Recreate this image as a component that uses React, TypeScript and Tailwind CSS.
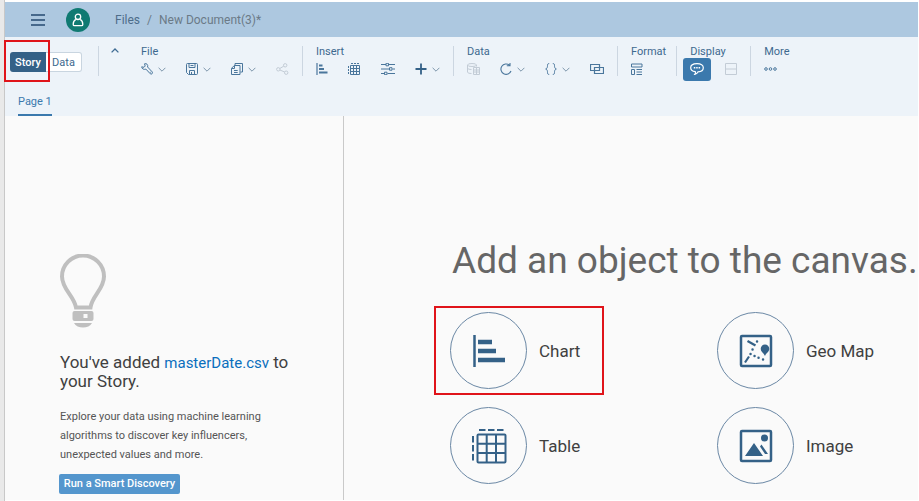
import type { ReactNode } from "react";

function Svg({ w = 12, h = 12, box, className = "", children }: { w?: number; h?: number; box?: string; className?: string; children: ReactNode }) {
  return (
    <svg width={w} height={h} viewBox={box ?? `0 0 ${w} ${h}`} fill="none" stroke="currentColor" strokeWidth="1" className={`shrink-0 ${className}`} aria-hidden="true">
      {children}
    </svg>
  );
}

function Chevron() {
  return (
    <Svg w={8} h={5} className="text-[#7d95ab]">
      <path d="M.6.8 4 4.200 7.400.8" />
    </Svg>
  );
}

function Tool({ label, menu, faded, children }: { label: string; menu?: boolean; faded?: boolean; children: ReactNode }) {
  return (
    <button type="button" aria-label={label} disabled={faded} className="flex shrink-0 items-center gap-[5px] text-[#4a769c] disabled:text-[#c3ccd6]">
      {children}
      {menu && <Chevron />}
    </button>
  );
}

function Group({ title, tight, children }: { title: string; tight?: boolean; children: ReactNode }) {
  return (
    <div className={`flex h-[30px] shrink-0 flex-col justify-between border-l border-[#ccd6e1] pl-[13px] ${tight ? "pr-2.5" : "pr-[13px]"}`}>
      <div className="text-[11px] leading-[12px]">{title}</div>
      <div className="flex h-[14px] items-center gap-5">{children}</div>
    </div>
  );
}

function FileGroup() {
  return (
    <div className="flex h-[30px] shrink-0 items-start border-l border-[#ccd6e1] pl-3">
      <button type="button" aria-label="Collapse toolbar" className="mt-0.5">
        <Svg w={8} h={5} className="text-[#3f6c94]">
          <path d="M.6 4.400 4 1l3.400 3.400" strokeWidth="1.300" />
        </Svg>
      </button>
      <div className="ml-[22px] flex h-full flex-col justify-between pr-[13px]">
        <div className="text-[11px] leading-[12px]">File</div>
        <div className="flex h-[14px] items-center gap-5">
          <Tool label="Edit" menu>
            <Svg>
              <path d="M.7 3.800 3 4.300 4.200 3 3.500.8C5.500 0 7.300 1.700 6.600 4l4.600 4.900c1 1.200-.7 3-1.900 1.900L4.900 6.100C2.900 6.900.7 5.900.7 3.800ZM8.900 9.200l.8.100" />
            </Svg>
          </Tool>
          <Tool label="Save" menu>
            <Svg>
              <path d="M.5 1.500q0-1 1-1h9q1 0 1 1v9q0 1-1 1h-8l-2-2ZM3 .5v4h6v-4M3.500 11.500v-4h5v4M5.500 9v2.500M4.500 2.500h3" />
            </Svg>
          </Tool>
          <Tool label="Copy" menu>
            <Svg>
              <path d="M4 2.500v-2h7.500v8.500H9.500M3.300 2.500h5.700v9H.5V5.300ZM3.500 2.700v2.800H.7M3 7.500h3.700M3 9.500h3.700" />
            </Svg>
          </Tool>
          <Tool label="Share" faded>
            <Svg w={13}>
              <circle cx="2.300" cy="6.300" r="1.700" />
              <circle cx="9.200" cy="2.300" r="1.700" />
              <circle cx="10.200" cy="9.700" r="1.700" />
              <path d="m3.800 5.500 3.900-2.300M3.900 7l4.800 2" />
            </Svg>
          </Tool>
        </div>
      </div>
    </div>
  );
}

function Toolbar() {
  return (
    <div className="flex items-start pt-[9px] text-[#3d698f]">
      <div className="mt-1.5 ml-[5px] flex h-5 w-[72px] shrink-0 text-[11px]">
        <div className="relative w-9">
          <button type="button" className="h-full w-full rounded-l-[3px] bg-[#346187] pt-0.5 leading-[18px] font-medium text-white">
            Story
          </button>
          <span className="pointer-events-none absolute -top-3 -right-1 -bottom-2.5 -left-1.5 border-2 border-[#e0141a]" />
        </div>
        <button type="button" className="flex-1 rounded-r-[3px] border border-l-0 border-[#c9d5e0] bg-white pt-px leading-[17px]">
          Data
        </button>
      </div>
      <div className="w-4 shrink-0" />
      <FileGroup />
      <Group title="Insert">
        <Tool label="Insert chart">
          <Svg>
            <path d="M1 0v12" strokeWidth="1.200" />
            <path d="M3 2.500h3.500M3 6h5M3 9.500h8.500" strokeWidth="1.800" />
          </Svg>
        </Tool>
        <Tool label="Insert table">
          <Svg w={13}>
            <path d="M2.500 2.500h9v9h-9ZM5.500 2.500v9M8.500 2.500v9M2.500 5.500h9M2.500 8.500h9" />
            <path d="M3 .5h2M6 .5h2M9 .5h2M.5 3v2M.5 6v2M.5 9v2" />
          </Svg>
        </Tool>
        <Tool label="Insert input control">
          <Svg w={14}>
            <path d="M0 1.500h5m3 0h6M0 6h8.500m3 0H14M0 10.500h3.500m3 0H14M5 .3h2.500v2.500H5ZM8.500 4.700H11v2.500H8.500ZM3.500 9.200H6v2.500H3.500Z" />
          </Svg>
        </Tool>
        <Tool label="Add" menu>
          <Svg className="text-[#346187]">
            <path d="M6 .5v11M.5 6h11" strokeWidth="1.800" />
          </Svg>
        </Tool>
      </Group>
      <Group title="Data">
        <Tool label="Data source" faded>
          <Svg w={13}>
            <ellipse cx="5" cy="2" rx="4.500" ry="1.500" />
            <path d="M.5 2v7c0 1 2 1.500 4 1.500M9.500 2v1.500M.5 5c0 1 2 1.500 4 1.500M6.500 4.500h6v7h-6ZM6.500 7h6M6.500 9h6M9.500 5v6" />
          </Svg>
        </Tool>
        <Tool label="Refresh" menu>
          <Svg>
            <path d="M9.500 2.200A5.200 5.200 0 1 0 11 8M6.800 2.800H10V0" strokeWidth="1.100" />
          </Svg>
        </Tool>
        <Tool label="Variables" menu>
          <Svg>
            <path d="M4.200.6C2.600.6 2.500 1.300 2.500 2.600S2.300 5.500.7 6c1.600.5 1.800 2.100 1.800 3.400s.1 2 1.700 2M7.800.6c1.600 0 1.700.7 1.700 2S9.700 5.500 11.300 6c-1.600.5-1.800 2.100-1.800 3.400s-.1 2-1.700 2" />
          </Svg>
        </Tool>
        <Tool label="Linked models">
          <Svg w={14}>
            <path d="M.5 1.500h9v6h-9ZM4.500 4.500h9v6h-9Z" strokeWidth="1.200" />
          </Svg>
        </Tool>
      </Group>
      <Group title="Format" tight>
        <Tool label="Layout">
          <Svg>
            <path d="M.5 1h10.500v3H.5ZM.5 6.500h3v5h-3ZM5.500 6.500H11M5.500 9H11M5.500 11.500H11" />
          </Svg>
        </Tool>
      </Group>
      <Group title="Display">
        <button type="button" aria-label="Comments" className="-ml-[7px] flex h-[23px] w-7 shrink-0 items-center justify-center rounded-[3px] bg-[#3b79ad] text-white">
          <Svg w={14} h={12}>
            <path d="M5.300 8.700C2.500 8.300.7 6.900.7 4.700.7 2.300 3 .7 7 .7s6.300 1.600 6.300 4c0 2.500-2.500 4-5.300 4.200-.4 1.100-1.500 2-3.200 2.400.6-.8.900-1.700.5-2.600Z" strokeWidth="1.200" />
            <path d="M3.800 4.800h1.500m.9 0h1.500m.9 0h1.500" strokeWidth="1.400" />
          </Svg>
        </button>
        <div className="-ml-1.5">
          <Tool label="Split view" faded>
            <Svg>
              <path d="M.5.500h11v11H.5ZM.5 6h11" />
            </Svg>
          </Tool>
        </div>
      </Group>
      <Group title="More">
        <Tool label="More">
          <Svg w={13}>
            <circle cx="2" cy="6" r="1.300" />
            <circle cx="6.500" cy="6" r="1.300" />
            <circle cx="11" cy="6" r="1.300" />
          </Svg>
        </Tool>
      </Group>
    </div>
  );
}

function Choice({ label, marked, children }: { label: string; marked?: boolean; children: ReactNode }) {
  return (
    <button type="button" className="relative flex items-center gap-3 text-left text-[17px] text-[#404040]">
      <span className="flex size-[77px] shrink-0 items-center justify-center rounded-full border border-[#6b88a5] text-[#346187]">
        {children}
      </span>
      <span className="pt-0.5 whitespace-nowrap">{label}</span>
      {marked && <span className="pointer-events-none absolute -top-1.5 -bottom-1.5 -left-4 w-[170px] border-2 border-[#e0141a]" />}
    </button>
  );
}

export default function App() {
  return (
    <div className="flex min-h-screen bg-white font-['Roboto','Liberation_Sans',sans-serif]">
      <div className="w-[5px] shrink-0 border-r border-[#c8c8c8] bg-[#e9e9e9]" />
      <div className="flex min-w-0 flex-1 flex-col pt-0.5 pr-px pb-px">
        <header className="flex h-[35px] shrink-0 items-center bg-[#adc8e0]">
          <button type="button" aria-label="Menu" className="ml-[26px] text-[#46698c]">
            <Svg w={14} h={12}>
              <path d="M0 1h14M0 6h14M0 11h14" strokeWidth="1.800" />
            </Svg>
          </button>
          <button type="button" aria-label="Account" className="ml-[21px] flex size-6 items-center justify-center rounded-full bg-[#107a72] text-white">
            <Svg w={12} h={14}>
              <circle cx="6" cy="3.800" r="2.700" strokeWidth="1.300" />
              <path d="M3.800 6.300C2 7.200 1.200 9 1.200 11.500q0 1.200 1.200 1.200h7.200q1.200 0 1.200-1.200C10.800 9 10 7.200 8.200 6.300" strokeWidth="1.300" />
            </Svg>
          </button>
          <nav className="ml-[25px] flex gap-[7px] text-[12px] text-[#6b7a87]">
            <a href="#files" className="text-[#4d6d8a]">Files</a>
            <span>/</span>
            <span>New Document(3)*</span>
          </nav>
        </header>

        <div className="flex h-[79px] shrink-0 flex-col justify-between bg-[#edf3f9]">
          <Toolbar />
          <div className="pl-[13px]">
            <button type="button" className="block h-[22px] border-b-2 border-[#3b79ad] pb-[5px] text-[11px] leading-[15px] text-[#3b79ad]">
              Page 1
            </button>
          </div>
        </div>

        <div className="flex flex-1 bg-[#fafafa]">
          <aside className="w-[339px] shrink-0 border-r border-[#c9c9c9] pt-[138px] pl-[55px]">
            <Svg w={46} h={75} className="text-[#bfbfbf]">
              <path d="M16 53.500C14 42 2 35 2 22.500a21 21 0 0 1 42 0C44 35 32 42 30.500 53.500Z" strokeWidth="4" />
              <path d="M14.500 57h17q2 0 2 2v6q0 2-2 2h-17q-2 0-2-2v-6q0-2 2-2ZM14 69h18c-3 6-15 6-18 0Z" fill="currentColor" stroke="none" />
              <path d="M23.500 60h4v4h-4Z" fill="#fafafa" stroke="none" />
            </Svg>
            <h2 className="mt-6 w-[240px] text-[17px] leading-[18px] text-[#404040]">
              You've added <a href="#data" className="text-[15px] text-[#0a6ebd]">masterDate.csv</a> to your Story.
            </h2>
            <p className="mt-[17px] w-[210px] text-[11px] leading-[19px] text-[#555]">
              Explore your data using machine learning algorithms to discover key influencers, unexpected values and more.
            </p>
            <button type="button" className="mt-2.5 -ml-px h-5 w-[121px] rounded-[2px] bg-[#5496cd] text-[11px] font-medium whitespace-nowrap text-white">
              Run a Smart Discovery
            </button>
          </aside>

          <main className="min-w-0 flex-1 pt-[121px] pl-[106px]">
            <h1 className="pl-0.5 text-[37px] leading-[48px] whitespace-nowrap text-[#666]">Add an object to the canvas.</h1>
            <div className="mt-[27px] grid grid-cols-[255px_max-content] gap-x-3 gap-y-[18px]">
              <Choice label="Chart" marked>
                <Svg w={34} h={34}>
                  <path d="M2.500 1v32" strokeWidth="2.500" />
                  <path d="M6 8h14M6 17h18M6 26h27" strokeWidth="4.500" />
                </Svg>
              </Choice>
              <Choice label="Geo Map">
                <Svg w={34} h={34}>
                  <rect x="2" y="2" width="30" height="30" rx="1" strokeWidth="2.500" />
                  <path d="m8.500 7 8 4.500M10 22.500l-4 6" strokeWidth="2.200" />
                  <path d="M18 7.500h.1M13.500 15.500h.1M11.500 20h.1M15.500 22h.1M19.500 23.700h.1M24 25.500h.1" strokeWidth="2.400" strokeLinecap="round" />
                  <path d="M26 22c-1-3-4.300-4-4.300-7.300a4.300 4.300 0 0 1 8.600 0C30.300 18 27 19 26 22Z" fill="currentColor" stroke="none" />
                </Svg>
              </Choice>
              <Choice label="Table">
                <Svg w={36} h={36}>
                  <rect x="6.500" y="6.500" width="28" height="28" rx="1" strokeWidth="2" />
                  <path d="M15.700 7v28M25 7v28M7 15.700h28M7 25h28M8 2h6.500M17 2h6.500M26 2h6.500M2 8v6.500M2 17v6.500M2 26v6.500" strokeWidth="2" />
                </Svg>
              </Choice>
              <Choice label="Image">
                <Svg w={34} h={34}>
                  <rect x="2" y="2" width="30" height="30" rx="1" strokeWidth="2.500" />
                  <path d="M6 27 15 14l9 13ZM22.500 15.500 29 25h-3l-5-7.500Z" fill="currentColor" stroke="none" />
                  <circle cx="25.500" cy="9" r="3.500" fill="currentColor" stroke="none" />
                </Svg>
              </Choice>
            </div>
          </main>
        </div>
      </div>
    </div>
  );
}
